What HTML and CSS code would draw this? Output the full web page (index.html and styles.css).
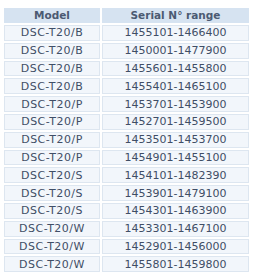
FILE: index.html
```html
<!DOCTYPE html>
<html>
<head>
<meta charset="utf-8">
<link rel="stylesheet" href="styles.css">
</head>
<body>
<div class="wrap">
<table class="serials">
<thead>
<tr><th class="c-model">Model</th><th class="c-range">Serial N° range</th></tr>
</thead>
<tbody>
<tr><td class="m">DSC-T20/B</td><td>1455101-1466400</td></tr>
<tr><td class="m">DSC-T20/B</td><td>1450001-1477900</td></tr>
<tr><td class="m">DSC-T20/B</td><td>1455601-1455800</td></tr>
<tr><td class="m">DSC-T20/B</td><td>1455401-1465100</td></tr>
<tr><td class="m">DSC-T20/P</td><td>1453701-1453900</td></tr>
<tr><td class="m">DSC-T20/P</td><td>1452701-1459500</td></tr>
<tr><td class="m">DSC-T20/P</td><td>1453501-1453700</td></tr>
<tr><td class="m">DSC-T20/P</td><td>1454901-1455100</td></tr>
<tr><td class="m">DSC-T20/S</td><td>1454101-1482390</td></tr>
<tr><td class="m">DSC-T20/S</td><td>1453901-1479100</td></tr>
<tr><td class="m">DSC-T20/S</td><td>1454301-1463900</td></tr>
<tr><td class="m">DSC-T20/W</td><td>1453301-1467100</td></tr>
<tr><td class="m">DSC-T20/W</td><td>1452901-1456000</td></tr>
<tr><td class="m">DSC-T20/W</td><td>1455801-1459800</td></tr>
</tbody>
</table>
</div>
</body>
</html>
```
FILE: styles.css
```css
html, body {
  margin: 0;
  padding: 0;
  background: #ffffff;
}
.wrap {
  padding: 6px 0 0 2px;
}
.serials {
  border-collapse: separate;
  border-spacing: 2px;
  width: 249px;
  font-family: "DejaVu Sans", Verdana, sans-serif;
  font-size: 11px;
  color: #3f4e66;
}
.serials th {
  box-sizing: border-box;
  background: #d6e3f1;
  color: #4b5a72;
  font-weight: bold;
  font-size: 10.5px;
  height: 15px;
  padding: 0;
  border: 1px solid #d6e3f1;
  line-height: 13px;
}
.serials td {
  box-sizing: border-box;
  background: #f2f6fb;
  border: 1px solid #dde6f0;
  text-align: center;
  padding: 0;
  height: 15.8px;
  line-height: 13px;
}
.serials td.m {
  letter-spacing: 0.5px;
}
.c-model { width: 96px; }
```
